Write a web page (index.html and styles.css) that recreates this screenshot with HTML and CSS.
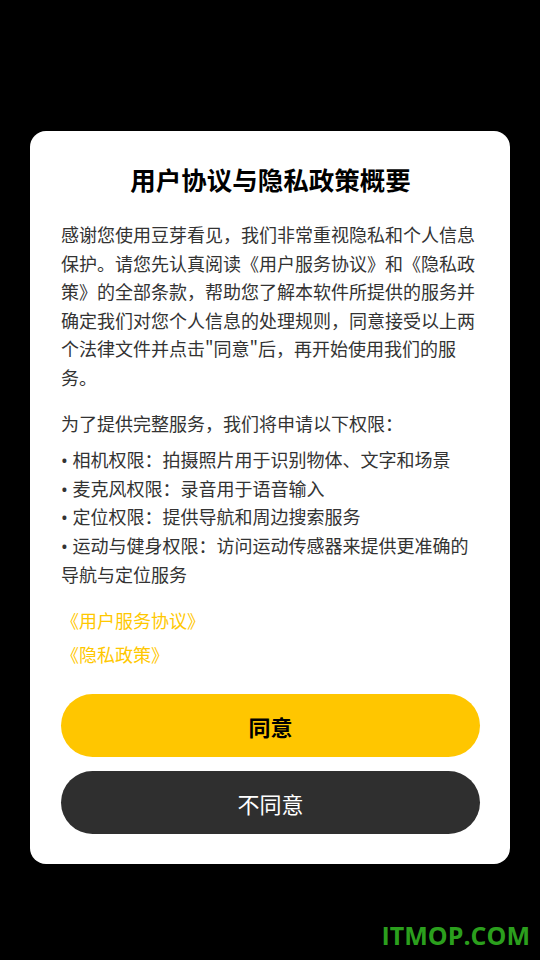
FILE: index.html
```html
<!DOCTYPE html>
<html lang="zh-CN">
<head>
    <meta charset="UTF-8">
    <title>用户协议与隐私政策概要</title>
    <link rel="stylesheet" href="styles.css">
</head>
<body>
    <div class="screen">
        <div class="dialog">
            <h1 class="title">用户协议与隐私政策概要</h1>
            <p class="intro">感谢您使用豆芽看见，我们非常重视隐私和个人信息保护。请您先认真阅读《用户服务协议》和《隐私政策》的全部条款，帮助您了解本软件所提供的服务并确定我们对您个人信息的处理规则，同意接受以上两个法律文件并点击"同意"后，再开始使用我们的服务。</p>
            <p class="lead">为了提供完整服务，我们将申请以下权限：</p>
            <ul class="perms">
                <li><span class="dot">• </span>相机权限：拍摄照片用于识别物体、文字和场景</li>
                <li><span class="dot">• </span>麦克风权限：录音用于语音输入</li>
                <li><span class="dot">• </span>定位权限：提供导航和周边搜索服务</li>
                <li><span class="dot">• </span>运动与健身权限：访问运动传感器来提供更准确的导航与定位服务</li>
            </ul>
            <div class="links">
                <a href="#">《用户服务协议》</a>
                <a href="#">《隐私政策》</a>
            </div>
            <div class="actions">
                <button class="btn btn-agree">同意</button>
                <button class="btn btn-refuse">不同意</button>
            </div>
        </div>
        <div class="watermark">ITMOP.COM</div>
    </div>
</body>
</html>
```

FILE: styles.css
```css
* {
    margin: 0;
    padding: 0;
    box-sizing: border-box;
}
html, body {
    background-color: #000;
}
body {
    font-family: "Noto Sans CJK SC", "Noto Sans", sans-serif;
    text-spacing-trim: space-all;
}
ul {
    list-style: none;
}
.screen {
    position: relative;
    width: 540px;
    height: 960px;
    padding-top: 131px;
}
.dialog {
    width: 480px;
    margin: 0 auto;
    background-color: #fff;
    border-radius: 16px;
    padding: 30px 30px 30px 31px;
}
.title {
    font-size: 25.5px;
    line-height: 36px;
    font-weight: bold;
    color: #000;
    text-align: center;
}
.intro, .lead, .perms {
    font-size: 18px;
    line-height: 28.6px;
    color: #333;
}
.intro {
    margin-top: 23px;
}
.lead {
    margin-top: 17px;
}
.perms {
    margin-top: 8px;
}
.perms .dot {
    font-family: "Noto Sans", sans-serif;
    line-height: 1;
}
.links {
    margin-top: 15px;
    display: flex;
    flex-direction: column;
}
.links a {
    font-size: 18px;
    line-height: 34px;
    color: #ffc800;
    text-decoration: none;
}
.actions {
    margin-top: 23px;
    display: flex;
    flex-direction: column;
    gap: 14px;
}
.btn {
    height: 63px;
    border: none;
    border-radius: 32px;
    font-family: "Noto Sans CJK SC", "Noto Sans", sans-serif;
    font-size: 22px;
}
.btn-agree {
    background-color: #ffc600;
    color: #000;
    font-weight: bold;
}
.btn-refuse {
    background-color: #2f2f2f;
    color: #fff;
}
.watermark {
    position: absolute;
    right: 10px;
    bottom: 8px;
    font-family: "Open Sans", sans-serif;
    font-weight: bold;
    font-size: 25px;
    color: #2b9f1d;
}
```
